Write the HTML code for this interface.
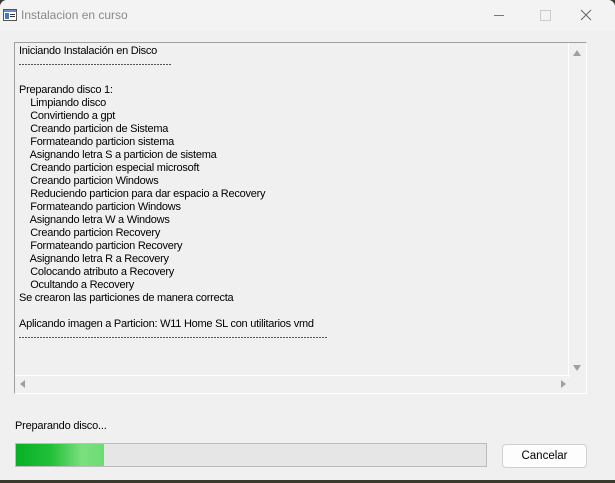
<!DOCTYPE html>
<html><head><meta charset="utf-8"><style>
body{margin:0;width:615px;height:483px;overflow:hidden;background:#3a3a2e;font-family:"Liberation Sans",sans-serif;}
.win{position:absolute;left:0;top:0;width:615px;height:480px;background:#f0f0f0;border-radius:7px 7px 0 0;overflow:hidden}
.title{position:absolute;left:0;top:0;width:615px;height:31px;background:#f3f3f3}
.ttext{position:absolute;left:21px;top:8px;font-size:12px;color:#8a8a8a}
.box{position:absolute;left:14px;top:42px;width:573px;height:352px;border:1px solid #fff;border-left-color:#a0a0a0;border-top-color:#a0a0a0;box-sizing:border-box;background:#f0f0f0}
.txt{position:absolute;left:4px;top:2px;font-size:11px;line-height:13px;color:#000;letter-spacing:-0.25px;white-space:pre}
.dash{display:inline-block;height:1px;background:repeating-linear-gradient(90deg,#555 0 2px,transparent 2px 3px);vertical-align:middle}
.vs{position:absolute;right:0;top:0;width:17px;height:334px;border-left:1px solid #fff}
.hs{position:absolute;left:0;bottom:0;width:555px;height:17px;border-top:1px solid #fff}
.tri{position:absolute;width:0;height:0}
.lbl{position:absolute;left:15px;top:420px;font-size:11px;color:#000;letter-spacing:-0.2px}
.pb{position:absolute;left:15px;top:443px;width:472px;height:24px;background:#e6e6e6;border:1px solid #bcbcbc;box-sizing:border-box}
.pg{position:absolute;left:0;top:0;width:88px;height:22px;background:linear-gradient(90deg,#06b025 0%,#22c03a 40%,#7be07f 75%,#6cdc74 100%)}
.btn{position:absolute;left:502px;top:444px;width:85px;height:24px;background:#fdfdfd;border:1px solid #d0d0d0;border-radius:4px;box-sizing:border-box;font-size:11.5px;text-align:center;line-height:22px}
</style></head><body>
<div class="win">
<div class="title">
<svg style="position:absolute;left:3px;top:9px" width="14" height="12"><rect x="0.5" y="0.5" width="13" height="11" fill="#fff" stroke="#555"/><rect x="1" y="1" width="12" height="2" fill="#6a8ec0"/><rect x="2" y="4" width="4" height="6" fill="#3a7bd5"/><rect x="7" y="5" width="5" height="1" fill="#333"/><rect x="7" y="7" width="5" height="1" fill="#333"/></svg>
<div class="ttext">Instalacion en curso</div>
<div style="position:absolute;left:494px;top:15px;width:10px;height:1px;background:#777"></div>
<div style="position:absolute;left:540px;top:10px;width:9px;height:9px;border:1px solid #ccc"></div>
<svg style="position:absolute;left:580px;top:9px" width="12" height="12"><path d="M1 1L11 11M11 1L1 11" stroke="#666" stroke-width="1"/></svg>
</div>
<div class="box">
<div class="txt">Iniciando Instalación en Disco
<span class="dash" style="width:153px"></span>

Preparando disco 1:
    Limpiando disco
    Convirtiendo a gpt
    Creando particion de Sistema
    Formateando particion sistema
    Asignando letra S a particion de sistema
    Creando particion especial microsoft
    Creando particion Windows
    Reduciendo particion para dar espacio a Recovery
    Formateando particion Windows
    Asignando letra W a Windows
    Creando particion Recovery
    Formateando particion Recovery
    Asignando letra R a Recovery
    Colocando atributo a Recovery
    Ocultando a Recovery
Se crearon las particiones de manera correcta

Aplicando imagen a Particion: W11 Home SL con utilitarios vmd
<span class="dash" style="width:309px"></span></div>
<div class="vs">
<div class="tri" style="left:4px;top:7px;border-left:4px solid transparent;border-right:4px solid transparent;border-bottom:6px solid #a0a0a0"></div>
<div class="tri" style="left:4px;top:322px;border-left:4px solid transparent;border-right:4px solid transparent;border-top:6px solid #a0a0a0"></div>
</div>
<div class="hs">
<div class="tri" style="left:5px;top:4px;border-top:4px solid transparent;border-bottom:4px solid transparent;border-right:5px solid #a0a0a0"></div>
<div class="tri" style="left:546px;top:4px;border-top:4px solid transparent;border-bottom:4px solid transparent;border-left:5px solid #a0a0a0"></div>
</div>
</div>
<div class="lbl">Preparando disco...</div>
<div class="pb"><div class="pg"></div></div>
<div class="btn">Cancelar</div>
</div>
</body></html>
